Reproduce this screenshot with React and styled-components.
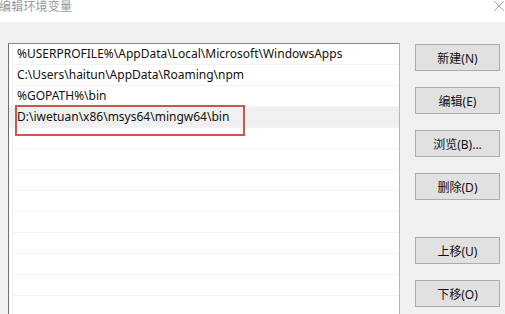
import React from "react";
import styled, { createGlobalStyle } from "styled-components";

const Global = createGlobalStyle`
  html, body { margin: 0; padding: 0; overflow: hidden; background: #f0f0f0; }
  * { box-sizing: border-box; }
`;

const FONT = `"Noto Sans", "Noto Sans CJK SC", sans-serif`;

const Window = styled.div`
  width: 505px;
  height: 314px;
  display: flex;
  flex-direction: column;
  background: #f0f0f0;
  font-family: ${FONT};
  overflow: hidden;
`;

const TitleBar = styled.div`
  height: 22px;
  flex: none;
  background: #ffffff;
  display: flex;
  align-items: flex-start;
  justify-content: space-between;
`;

const Title = styled.div`
  font-size: 12px;
  line-height: 13px;
  color: #9a9a9a;
  margin-left: -1px;
  letter-spacing: 0.2px;
`;

const CloseBtn = styled.div`
  width: 14px;
  height: 12px;
  display: flex;
  align-items: center;
  justify-content: flex-start;
  margin-right: -2px;
  color: #a8a8a8;
`;

const Body = styled.div`
  flex: 1;
  display: flex;
  align-items: flex-start;
  padding: 21px 0 0 8px;
  gap: 15px;
`;

const ListBox = styled.div`
  position: relative;
  width: 392px;
  height: 320px;
  flex: none;
  background: #ffffff;
  border: 1px solid #8a8a8a;
  border-left-color: #6e6e6e;
  border-right-color: #b5b5b5;
`;

const ListInner = styled.div`
  margin-left: 3px;
  border-left: 1px solid #f0f0f0;
`;

const Row = styled.div`
  height: 21px;
  border-bottom: 1px solid #f3f3f3;
  font-size: 12px;
  line-height: 20px;
  color: #111111;
  white-space: nowrap;
  background: ${(p) => (p.$selected ? "#f0f0f0" : "#ffffff")};
  margin-left: ${(p) => (p.$selected ? "-4px" : "0")};
  padding-left: ${(p) => (p.$selected ? "8px" : "4px")};
`;

const Highlight = styled.div`
  position: absolute;
  left: 6px;
  top: 61px;
  width: 230px;
  height: 31px;
  border: 2px solid #c8574c;
  pointer-events: none;
`;

const ButtonColumn = styled.div`
  display: flex;
  flex-direction: column;
  gap: 16px;
  padding-top: 1px;
`;

const Button = styled.div`
  width: 85px;
  height: 27px;
  background: #e1e1e1;
  border: 1px solid #adadad;
  font-size: 12px;
  color: #111111;
  display: flex;
  align-items: center;
  justify-content: center;
  margin-top: ${(p) => (p.$spaced ? "21px" : "0")};
`;

const items = [
  "%USERPROFILE%\\AppData\\Local\\Microsoft\\WindowsApps",
  "C:\\Users\\haitun\\AppData\\Roaming\\npm",
  "%GOPATH%\\bin",
  "D:\\iwetuan\\x86\\msys64\\mingw64\\bin",
];

export default function App() {
  const rows = [...items];
  while (rows.length < 14) rows.push("");
  return (
    <Window>
      <Global />
      <TitleBar>
        <Title>编辑环境变量</Title>
        <CloseBtn>
          <svg width="12" height="12" viewBox="0 0 12 12">
            <path d="M1 1 L11 11 M11 1 L1 11" stroke="currentColor" strokeWidth="1" fill="none" />
          </svg>
        </CloseBtn>
      </TitleBar>
      <Body>
        <ListBox>
          <ListInner>
            {rows.map((t, i) => (
              <Row key={i} $selected={i === 3}>
                {t}
              </Row>
            ))}
          </ListInner>
          <Highlight />
        </ListBox>
        <ButtonColumn>
          <Button>新建(N)</Button>
          <Button>编辑(E)</Button>
          <Button>浏览(B)...</Button>
          <Button>删除(D)</Button>
          <Button $spaced>上移(U)</Button>
          <Button>下移(O)</Button>
        </ButtonColumn>
      </Body>
    </Window>
  );
}
